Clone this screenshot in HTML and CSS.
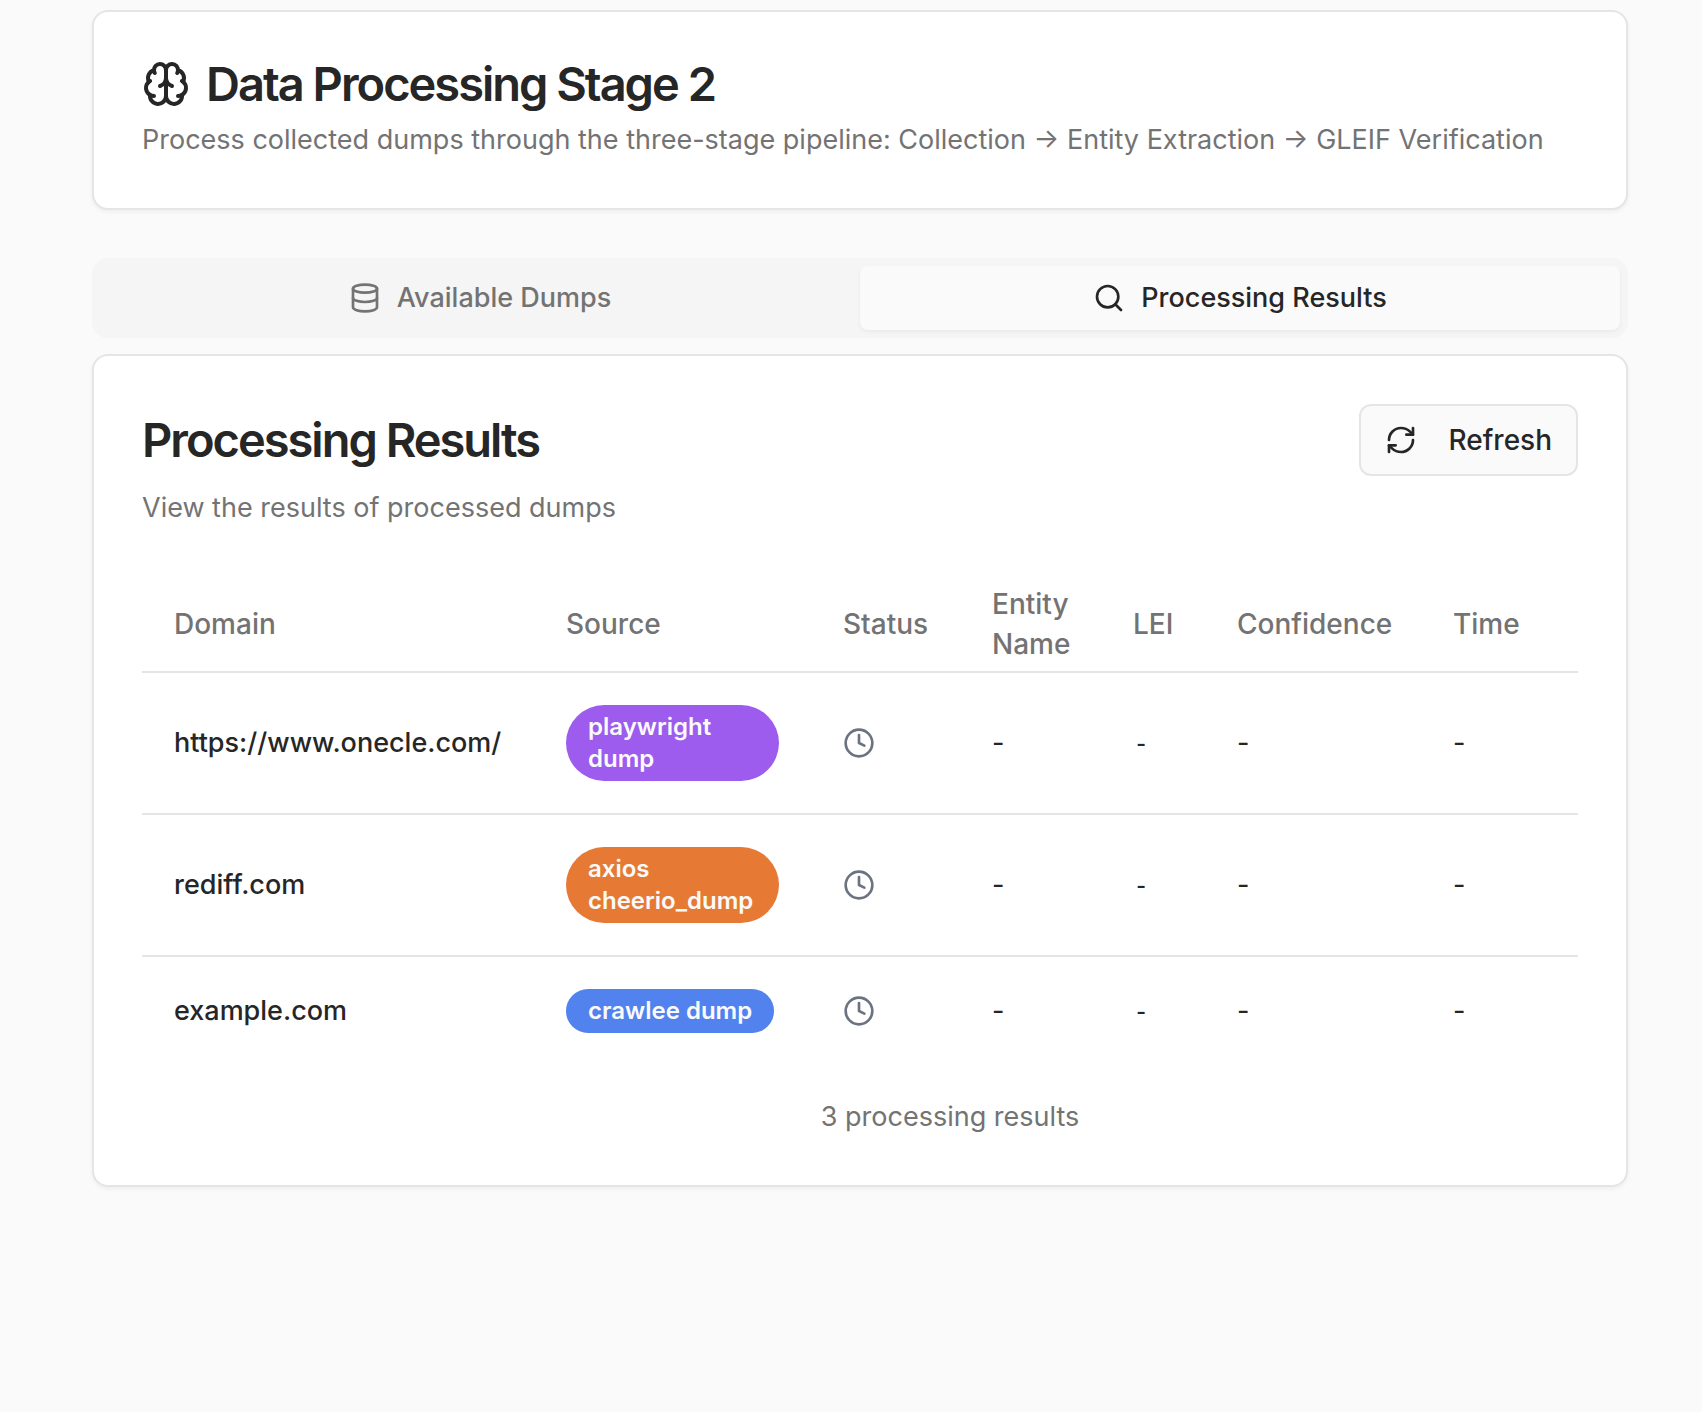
FILE: index.html
```html
<!DOCTYPE html>
<html lang="en">
<head>
<meta charset="utf-8">
<meta name="viewport" content="width=device-width, initial-scale=1">
<title>Data Processing Stage 2</title>
<link rel="stylesheet" href="styles.css">
</head>
<body>
<svg class="sprite" aria-hidden="true">
  <symbol id="clock" viewBox="0 0 24 24"><circle cx="12" cy="12" r="10"/><polyline points="12 6 12 12 16 14"/></symbol>
</svg>
<main class="page">
  <header class="card">
    <h1 class="title">
      <svg class="icon icon-large" viewBox="0 0 24 24" aria-hidden="true"><path d="M12 5a3 3 0 1 0-5.997.125 4 4 0 0 0-2.526 5.77 4 4 0 0 0 .556 6.588A4 4 0 1 0 12 18Z"/><path d="M12 5a3 3 0 1 1 5.997.125 4 4 0 0 1 2.526 5.77 4 4 0 0 1-.556 6.588A4 4 0 1 1 12 18Z"/><path d="M15 13a4.500 4.500 0 0 1-3-4 4.500 4.500 0 0 1-3 4"/><path d="M17.599 6.500a3 3 0 0 0 .399-1.375"/><path d="M6.003 5.125A3 3 0 0 0 6.401 6.500"/><path d="M3.477 10.896a4 4 0 0 1 .585-.396"/><path d="M19.938 10.500a4 4 0 0 1 .585.396"/><path d="M6 18a4 4 0 0 1-1.967-.516"/><path d="M19.967 17.484A4 4 0 0 1 18 18"/></svg>
      Data Processing Stage 2
    </h1>
    <p class="description">Process collected dumps through the three-stage pipeline: Collection → Entity Extraction → GLEIF Verification</p>
  </header>

  <section class="tabs">
    <div class="tab-list" role="tablist">
      <button class="tab" type="button" role="tab" aria-selected="false">
        <svg class="icon" viewBox="0 0 24 24" aria-hidden="true"><ellipse cx="12" cy="5" rx="9" ry="3"/><path d="M3 5V19A9 3 0 0 0 21 19V5"/><path d="M3 12A9 3 0 0 0 21 12"/></svg>
        Available Dumps
      </button>
      <button class="tab tab-active" type="button" role="tab" aria-selected="true">
        <svg class="icon" viewBox="0 0 24 24" aria-hidden="true"><circle cx="11" cy="11" r="8"/><path d="m21 21-4.300-4.300"/></svg>
        Processing Results
      </button>
    </div>

    <div class="card" role="tabpanel">
      <div class="card-heading">
        <h2 class="title">Processing Results</h2>
        <button class="refresh" type="button">
          <svg class="icon" viewBox="0 0 24 24" aria-hidden="true"><path d="M3 12a9 9 0 0 1 9-9 9.750 9.750 0 0 1 6.740 2.740L21 8"/><path d="M21 3v5h-5"/><path d="M21 12a9 9 0 0 1-9 9 9.750 9.750 0 0 1-6.740-2.740L3 16"/><path d="M8 16H3v5"/></svg>
          Refresh
        </button>
      </div>
      <p class="description">View the results of processed dumps</p>

      <div class="table-wrap">
        <table class="results">
          <caption>3 processing results</caption>
          <colgroup>
            <col class="col-domain"><col class="col-source"><col class="col-status"><col class="col-entity"><col class="col-lei"><col class="col-confidence"><col class="col-time"><col class="col-actions">
          </colgroup>
          <thead>
            <tr><th scope="col">Domain</th><th scope="col">Source</th><th scope="col">Status</th><th scope="col">Entity Name</th><th scope="col">LEI</th><th scope="col">Confidence</th><th scope="col">Time</th><td></td></tr>
          </thead>
          <tbody>
            <tr>
              <td class="domain">https://www.onecle.com/</td>
              <td><span class="badge badge-purple">playwright dump</span></td>
              <td><svg class="icon status" role="img" aria-label="Pending"><use href="#clock"/></svg></td>
              <td>-</td><td class="lei">-</td><td>-</td><td>-</td><td></td>
            </tr>
            <tr>
              <td class="domain">rediff.com</td>
              <td><span class="badge badge-orange">axios cheerio_dump</span></td>
              <td><svg class="icon status" role="img" aria-label="Pending"><use href="#clock"/></svg></td>
              <td>-</td><td class="lei">-</td><td>-</td><td>-</td><td></td>
            </tr>
            <tr>
              <td class="domain">example.com</td>
              <td><span class="badge badge-blue">crawlee dump</span></td>
              <td><svg class="icon status" role="img" aria-label="Pending"><use href="#clock"/></svg></td>
              <td>-</td><td class="lei">-</td><td>-</td><td>-</td><td></td>
            </tr>
          </tbody>
        </table>
      </div>
    </div>
  </section>
</main>
</body>
</html>
```

FILE: styles.css
```css
* {
  box-sizing: border-box;
}

body {
  margin: 0;
  background: #fafafa;
  color: #262626;
  font-family: Inter, "Liberation Sans", sans-serif;
  font-size: 27px;
  line-height: 40px;
}

h1, h2, p {
  margin: 0;
}

button {
  font: inherit;
  color: inherit;
  border: 0;
}

.sprite {
  display: none;
}

.page {
  display: flex;
  flex-direction: column;
  gap: 48px;
  padding: 10px 74px 48px 92px;
}

.card {
  padding: 48px;
  background: #fff;
  border: 2px solid #e5e5e5;
  border-radius: 16px;
  box-shadow: 0 2px 4px rgba(0, 0, 0, 0.05);
}

.title {
  display: flex;
  align-items: center;
  gap: 16px;
  font-size: 47px;
  font-weight: 600;
  line-height: 48px;
  letter-spacing: -2px;
}

.description {
  margin-top: 12px;
  color: #737373;
}

.icon {
  flex: none;
  width: 32px;
  height: 32px;
  fill: none;
  stroke: currentColor;
  stroke-width: 2;
  stroke-linecap: round;
  stroke-linejoin: round;
}

.icon-large {
  width: 48px;
  height: 48px;
}

.tabs {
  display: flex;
  flex-direction: column;
  gap: 16px;
}

.tab-list {
  display: grid;
  grid-template-columns: 1fr 1fr;
  padding: 8px;
  background: #f5f5f5;
  border-radius: 16px;
}

.tab {
  display: flex;
  align-items: center;
  justify-content: center;
  gap: 16px;
  padding: 12px 24px;
  background: transparent;
  border-radius: 8px;
  color: #737373;
  font-weight: 500;
}

.tab-active {
  background: #fafafa;
  color: #262626;
  box-shadow: 0 2px 4px rgba(0, 0, 0, 0.05);
}

.card-heading {
  display: flex;
  align-items: center;
  justify-content: space-between;
}

.refresh {
  display: flex;
  align-items: center;
  gap: 32px;
  padding: 14px 24px;
  background: #fafafa;
  border: 2px solid #e5e5e5;
  border-radius: 12px;
  font-size: 28px;
  font-weight: 500;
}

.table-wrap {
  margin-top: 48px;
  overflow-x: auto;
  scrollbar-width: none;
}

.results {
  width: 1616px;
  table-layout: fixed;
  border-collapse: separate;
  border-spacing: 0;
  text-align: left;
}

.results caption {
  caption-side: bottom;
  padding-top: 32px;
  color: #737373;
}

.col-domain { width: 392px; }
.col-source { width: 277px; }
.col-status { width: 149px; }
.col-entity { width: 141px; }
.col-lei { width: 104px; }
.col-confidence { width: 216px; }
.col-time { width: 128px; }
.col-actions { width: 209px; }

.results th {
  height: 97px;
  padding: 0 32px;
  color: #737373;
  font-size: 28px;
  font-weight: 500;
}

.results td {
  padding: 32px;
}

.results thead td {
  padding: 0;
}

.results thead th,
.results thead td,
.results tbody tr:not(:last-child) td {
  border-bottom: 2px solid #e5e5e5;
}

.results .domain {
  font-weight: 500;
  white-space: nowrap;
}

.results .lei {
  font-family: "DejaVu Sans Mono", monospace;
}

.badge {
  display: inline-block;
  padding: 6px 22px;
  border-radius: 38px;
  color: #fafafa;
  font-size: 24px;
  font-weight: 600;
  line-height: 32px;
  vertical-align: middle;
}

.badge-purple { background: #9d5cee; }
.badge-orange { background: #e67a35; }
.badge-blue { background: #5182ee; }

.status {
  display: block;
  color: #6b7280;
}
```
